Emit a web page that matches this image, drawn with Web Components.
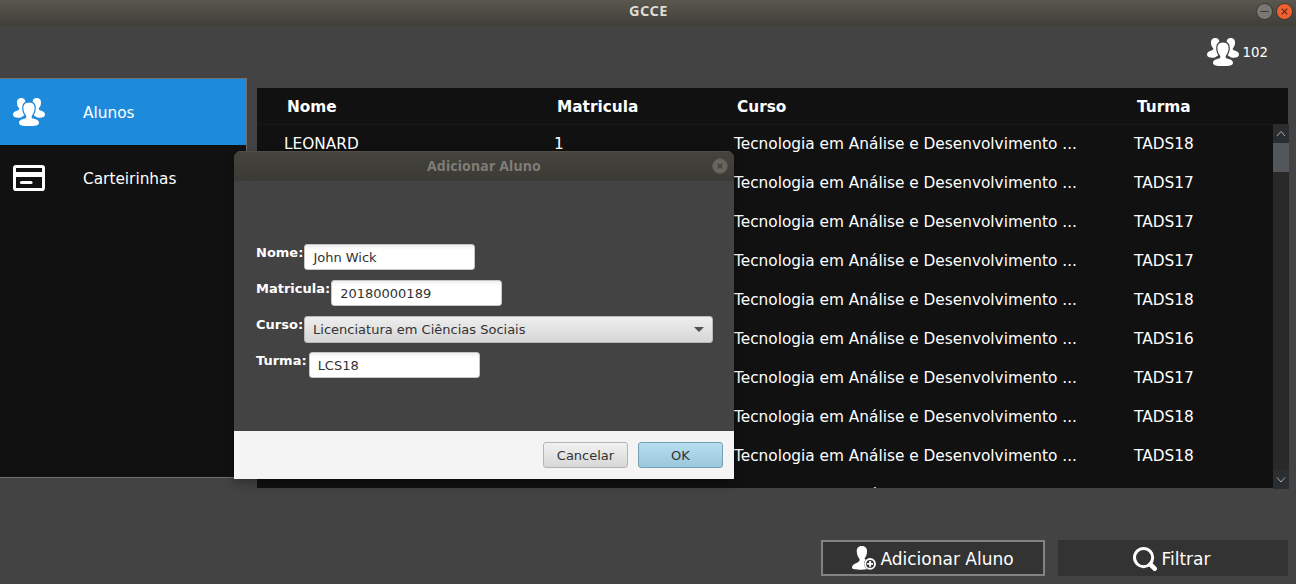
<!DOCTYPE html>
<html lang="pt-BR">
<head>
<meta charset="utf-8">
<title>GCCE</title>
<style>
html,body{margin:0;height:100%;overflow:hidden;background:#434343}
body{font-family:"DejaVu Sans",sans-serif;color:#fff}
</style>
</head>
<body>
<gcce-window></gcce-window>
<script>
const ICONS={
people:`<svg viewBox="0 0 32 28" fill="#fff"><path d="M8.200 0C4.900 0 3.800 2.500 4 5c.1 2.200.8 3.800 2 5.100.7 1.100.1 1.900-1.500 2.400C1.500 13.400 0 14.500 0 16.500c0 2.300 2.300 3.200 5.200 3.200 2 0 3.400-.5 4.300-1.300.7-.5 1.300-.9 1.900-1.100C9.700 15 9.100 12.200 9.200 9.600c.1-2.700 1.200-4.900 3.200-5.900C12.100 1.500 11 0 8.200 0z"/><path d="M23.800 0c3.300 0 4.400 2.500 4.200 5-.1 2.200-.8 3.800-2 5.100-.7 1.100-.1 1.900 1.500 2.400 3 .9 4.500 2 4.500 4 0 2.300-2.300 3.200-5.200 3.200-2 0-3.400-.5-4.300-1.300-.7-.5-1.300-.9-1.900-1.100 1.700-2.300 2.300-5.100 2.200-7.700-.1-2.700-1.200-4.900-3.200-5.900C19.900 1.500 21 0 23.800 0z"/><path d="M16 4.400c-4.300 0-5.800 2.800-5.600 5.900.1 2.700.9 5 2.300 6.700 1.100 1.600.9 3.100-.5 3.600C8.500 21.400 6 22.400 6 24.900 6 27.200 9.800 28 16 28s10-.8 10-3.100c0-2.500-2.500-3.500-6.200-4.300-1.400-.5-1.600-2-.5-3.600 1.400-1.700 2.200-4 2.300-6.700.2-3.100-1.300-5.900-5.600-5.900z"/></svg>`,
card:`<svg viewBox="0 0 32 26"><rect x="1.500" y="1.500" width="29" height="23" rx="1.600" fill="none" stroke="#fff" stroke-width="3"/><path d="M3 7h26v5H3z" fill="#fff"/><path d="M8.500 17.500h9.500" stroke="#fff" stroke-width="3.200" stroke-linecap="round"/></svg>`,
add:`<svg viewBox="0 0 24 24"><path fill="#fff" d="M9.800 0C5.900 0 4.600 2.600 4.800 5.600c.1 2.900.9 5.100 2.300 6.700 1.100 1.600.6 3.100-1.600 4.100C2.500 17.700 0 18.900 0 21.800c0 1.500 4 1.900 9.500 1.900 2 0 4-.1 5.500-.4a6.700 6.700 0 0 1-2.900-5.500c0-1.600.6-3 1.500-4.100-1-.6-1.200-1.200-.6-1.900 1.300-1.600 1.900-3.500 2-6.200C15.200 2.600 13.700 0 9.800 0z"/><circle cx="18.100" cy="17.900" r="4.900" fill="#333" stroke="#fff" stroke-width="1.900"/><path d="M18.100 15v5.800M15.200 17.900H21" stroke="#fff" stroke-width="1.900"/></svg>`,
search:`<svg viewBox="0 0 24 24" fill="none" stroke="#fff"><circle cx="10.600" cy="10.600" r="9.100" stroke-width="3"/><path d="M17.500 17.500l4.200 4.200" stroke-width="4.600" stroke-linecap="round"/></svg>`
};
function define(name,render){
  customElements.define(name,class extends HTMLElement{
    connectedCallback(){
      if(this.shadowRoot)return;
      const root=this.attachShadow({mode:'open'});
      const t=document.createElement('template');
      t.innerHTML=render(this);
      root.append(t.content.cloneNode(true));
    }
  });
}
define('app-icon',el=>`<style>:host{display:block;flex:none}svg{display:block;width:100%;height:100%}</style>${ICONS[el.getAttribute('name')]}`);

define('title-bar',()=>`<style>
:host{box-sizing:border-box;height:26px;display:grid;grid-template-columns:60px 1fr 60px;align-items:center;background:linear-gradient(#5a574e,#3f3e39);padding-bottom:4px}
b{grid-column:2;text-align:center;font:bold 14.500px/18px "Noto Sans",sans-serif;letter-spacing:.5px;color:#dfdbd2;margin-left:1px;padding-bottom:2px}
div{display:flex;gap:3px;justify-content:flex-end;padding-right:3px}
svg{width:17px;height:17px;display:block}
</style><b><slot></slot></b><div>
<svg viewBox="0 0 17 17"><circle cx="8.500" cy="8.500" r="8" fill="#797872" stroke="#363530"/><path d="M4.500 8.500h8" stroke="#3c3b37"/></svg>
<svg viewBox="0 0 17 17"><circle cx="8.500" cy="8.500" r="8" fill="#f1602f" stroke="#363530"/><path d="M5.700 5.700l5.600 5.600m0-5.600l-5.600 5.600" stroke="#55291b" stroke-width="1.200"/></svg></div>`);

define('side-item',el=>`<style>
:host{display:flex;align-items:center;height:66px;padding-left:13px;font-size:15.330px}
:host([active]){background:#1e8adc}
app-icon{width:32px;height:${el.getAttribute('h')}px}
span{margin-left:38px;padding-top:1px}
</style><app-icon name="${el.getAttribute('icon')}"></app-icon><span><slot></slot></span>`);

define('side-menu',()=>`<style>
:host{display:block;box-sizing:border-box;width:247px;height:400px;margin-top:52px;background:#111;border:solid #717171;border-width:1px 1px 1px 0}
</style><slot></slot>`);

define('student-row',el=>{
 const c=(el.getAttribute('cells')||'').split('|');
 return `<style>:host{display:grid;grid-template-columns:270px 180px 400px 1fr;height:39px;line-height:41px;padding-left:27px;font-size:15.330px;white-space:pre}</style>${c.map(x=>`<span>${x}</span>`).join('')}`;
});

define('scroll-rail',()=>`<style>
:host{display:grid;grid-template-rows:19px 1fr 19px;width:16px;height:365px;background:#292929}
div{display:grid;place-items:center;background:#2a2e31}
svg{width:10px;height:7px}
section i{display:block;height:29px;background:#53565a}
</style><div><svg viewBox="0 0 10 7" fill="none" stroke="#aaa"><path d="M1 6l4-4.500L9 6"/></svg></div><section><i></i></section><div><svg viewBox="0 0 10 7" fill="none" stroke="#aaa"><path d="M1 1.500L5 6l4-4.500"/></svg></div>`);

const turmas=['TADS18','TADS17','TADS17','TADS17','TADS18','TADS16','TADS17','TADS18','TADS18',''];
define('student-table',()=>`<style>
:host{display:block;width:1032px;height:401px}
header{box-sizing:border-box;display:grid;grid-template-columns:270px 180px 400px 1fr;width:1031px;height:36px;line-height:39px;padding-left:30px;background:#111;font-weight:bold;font-size:15.330px}
main{display:flex}
.rows{box-sizing:border-box;width:1016px;height:364px;overflow:hidden;background:#111;border-top:1px solid #181818}
student-row:first-child{margin-top:-1px}
</style><header><span>Nome</span><span>Matricula</span><span>Curso</span><span>Turma</span></header>
<main><div class="rows">${turmas.map((t,i)=>`<student-row cells="${i?'|':'LEONARD|1'}|Tecnologia em Análise e Desenvolvimento ...|${t}"></student-row>`).join('')}</div><scroll-rail></scroll-rail></main>`);

define('action-button',el=>`<style>
:host{box-sizing:border-box;display:flex;align-items:center;justify-content:center;gap:4px;height:36px;background:#333;font-size:17px;padding-top:1px}
:host([focused]){border:2px solid #828282;padding-top:0}
app-icon{width:24px;height:24px}
:host(:not([focused])) app-icon{margin-left:-2px}
span{padding-top:1px}
</style><app-icon name="${el.getAttribute('icon')}"></app-icon><span><slot></slot></span>`);

define('form-field',el=>{
 const sel=el.hasAttribute('select');
 return `<style>
:host{display:flex;height:36px;font-size:13px}
b{line-height:17px}
div{box-sizing:border-box;display:flex;align-items:center;justify-content:space-between;width:${sel?409:171}px;height:${sel?27:26}px;margin-left:${el.getAttribute('gap')||1}px;padding:${sel?'0 8px 1px':'1px 8px 0'};border:1px solid ${sel?'#b9b9b9':'#c6c6c6'};border-radius:3px;color:#323232;background:${sel?'linear-gradient(#eee,#d6d6d6)':'linear-gradient(#efefef,#fff 5px)'}}
i{border:5px solid transparent;border-top-color:#505050;border-bottom:0}
</style><b>${el.getAttribute('label')}</b><div><span><slot></slot></span>${sel?'<i></i>':''}</div>`;
});

define('dialog-button',()=>`<style>
:host{box-sizing:border-box;display:block;width:85px;height:26px;line-height:25px;text-align:center;font-size:13px;color:#323232;border:1px solid #b4b4b4;border-radius:3px;background:linear-gradient(#f1f1f1,#d8d8d8)}
:host([primary]){border-color:#789fb0;background:linear-gradient(#b6def0,#9bc7dc)}
</style><slot></slot>`);

define('student-dialog',()=>`<style>
:host{display:flex;flex-direction:column;width:500px;height:328px;border-radius:7px 7px 0 0;box-shadow:0 4px 12px rgba(0,0,0,.3);background:#434343;overflow:hidden}
header{box-sizing:border-box;display:grid;grid-template-columns:30px 1fr 30px;align-items:center;height:30px;background:linear-gradient(#45433d,#3b3a36);border-top:1px solid #504e48;padding-bottom:2px}
header b{grid-column:2;text-align:center;font:bold 14px/20px "Noto Sans",sans-serif;letter-spacing:.2px;color:#807d78}
svg{width:16px;height:16px;margin-left:8px}
main{height:186px;box-sizing:border-box;flex:1;padding:63px 0 0 22px}
footer{display:flex;gap:10px;justify-content:flex-end;box-sizing:border-box;height:48px;padding:11px 11px;background:#f4f4f4}
</style><header><b>Adicionar Aluno</b><svg viewBox="0 0 16 16"><circle cx="8" cy="8" r="7.500" fill="#69665f" stroke="#57544d"/><path d="M5.500 5.500l5 5m0-5l-5 5" stroke="#3c3b37" stroke-width="1.200"/></svg></header>
<main><form-field label="Nome:">John Wick</form-field><form-field label="Matricula:">20180000189</form-field><form-field label="Curso:" select>Licenciatura em Ciências Sociais</form-field><form-field label="Turma:" gap="2">LCS18</form-field></main>
<footer><dialog-button>Cancelar</dialog-button><dialog-button primary>OK</dialog-button></footer>`);

define('gcce-window',()=>`<style>
:host{display:block;position:relative;width:1296px;height:584px;overflow:hidden;background:#434343}
.body{display:flex;gap:10px}
.right{width:1032px}
.count{box-sizing:border-box;display:flex;justify-content:flex-end;align-items:center;gap:4px;height:62px;padding:0 21px 10px 0;font-size:13.300px}
.count app-icon{width:32px;height:28px}
.actions{display:flex;justify-content:flex-end;gap:13px;margin-top:51px;padding-right:1px}
.actions :first-child{width:224px}.actions :last-child{width:230px}
student-dialog{position:absolute;left:234px;top:151px}
</style><title-bar>GCCE</title-bar>
<div class="body"><side-menu><side-item icon="people" h="28" active>Alunos</side-item><side-item icon="card" h="26">Carteirinhas</side-item></side-menu>
<div class="right"><div class="count"><app-icon name="people"></app-icon><span>102</span></div><student-table></student-table>
<div class="actions"><action-button icon="add" focused>Adicionar Aluno</action-button><action-button icon="search">Filtrar</action-button></div></div></div>
<student-dialog></student-dialog>`);
</script>
</body>
</html>
